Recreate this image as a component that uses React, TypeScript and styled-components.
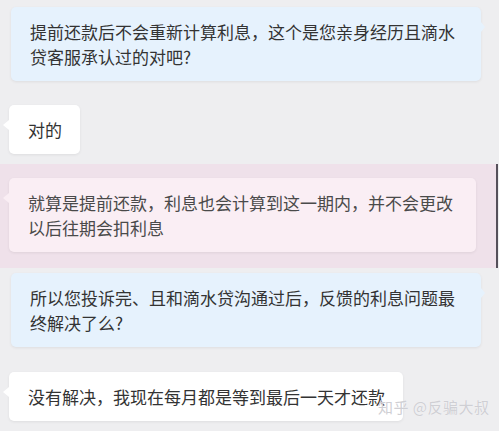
import styled, { createGlobalStyle } from 'styled-components';

const GlobalStyle = createGlobalStyle`
  html, body {
    margin: 0;
    padding: 0;
    background: #eeeef0;
  }
  body {
    font-family: "Noto Sans CJK SC", "Noto Sans", sans-serif;
    color: #333;
  }
`;

const Page = styled.div`
  position: relative;
  width: 499px;
  height: 431px;
  overflow: hidden;
  background: #eeeef0;
  padding-top: 7px;
  box-sizing: border-box;
`;

const Row = styled.div<{ $top: number; $left: number; $right: number }>`
  display: flex;
  margin-top: ${({ $top }) => $top}px;
  padding-left: ${({ $left }) => $left}px;
  padding-right: ${({ $right }) => $right}px;
`;

const Band = styled.div`
  margin-top: 10px;
  padding: 14px 0 16px;
  background: #efe1ea;
  border-right: 2px solid #55505a;
  margin-right: 1px;
`;

type Tone = 'blue' | 'white' | 'pink';

const fills: Record<Tone, string> = {
  blue: '#e6f2fd',
  white: '#ffffff',
  pink: '#faeef4',
};

const Bubble = styled.div<{ $tone: Tone; $side: 'left' | 'right'; $grow?: boolean }>`
  position: relative;
  flex: ${({ $grow }) => ($grow ? '1' : '0 0 auto')};
  padding: 12px 18px 12px 19px;
  background: ${({ $tone }) => fills[$tone]};
  border-radius: 5px;
  box-shadow: 0 1px 3px rgba(0, 0, 0, 0.07);
  font-size: 17px;
  line-height: 25px;
  color: ${({ $tone }) => ($tone === 'pink' ? '#4a4a4a' : '#333')};

  &::before {
    content: '';
    position: absolute;
    top: 15px;
    ${({ $side }) => ($side === 'left' ? 'left: -6px;' : 'right: -4px;')}
    border-top: 5px solid transparent;
    border-bottom: 5px solid transparent;
    ${({ $side, $tone }) =>
      $side === 'left'
        ? `border-right: 6px solid ${fills[$tone]};`
        : `border-left: 4px solid ${fills[$tone]};`}
  }
`;

const Watermark = styled.div`
  position: absolute;
  left: 378px;
  top: 396px;
  font-size: 15px;
  letter-spacing: 0.5px;
  color: #cfcfd4;
  text-shadow: 0 0 1px rgba(255, 255, 255, 0.8);
  white-space: nowrap;
`;

export default function App() {
  return (
    <>
      <GlobalStyle />
      <Page>
        <Row $top={0} $left={11} $right={18}>
          <Bubble $tone="blue" $side="right" $grow>
            提前还款后不会重新计算利息，这个是您亲身经历且滴水贷客服承认过的对吧?
          </Bubble>
        </Row>
        <Row $top={24} $left={9} $right={0}>
          <Bubble $tone="white" $side="left">对的</Bubble>
        </Row>
        <Band>
          <Row $top={0} $left={9} $right={20}>
            <Bubble $tone="pink" $side="left" $grow>
              就算是提前还款，利息也会计算到这一期内，并不会更改以后往期会扣利息
            </Bubble>
          </Row>
        </Band>
        <Row $top={5} $left={11} $right={18}>
          <Bubble $tone="blue" $side="right" $grow>
            所以您投诉完、且和滴水贷沟通过后，反馈的利息问题最终解决了么?
          </Bubble>
        </Row>
        <Row $top={25} $left={9} $right={0}>
          <Bubble $tone="white" $side="left">
            没有解决，我现在每月都是等到最后一天才还款
          </Bubble>
        </Row>
        <Watermark>知乎 @反骗大叔</Watermark>
      </Page>
    </>
  );
}
